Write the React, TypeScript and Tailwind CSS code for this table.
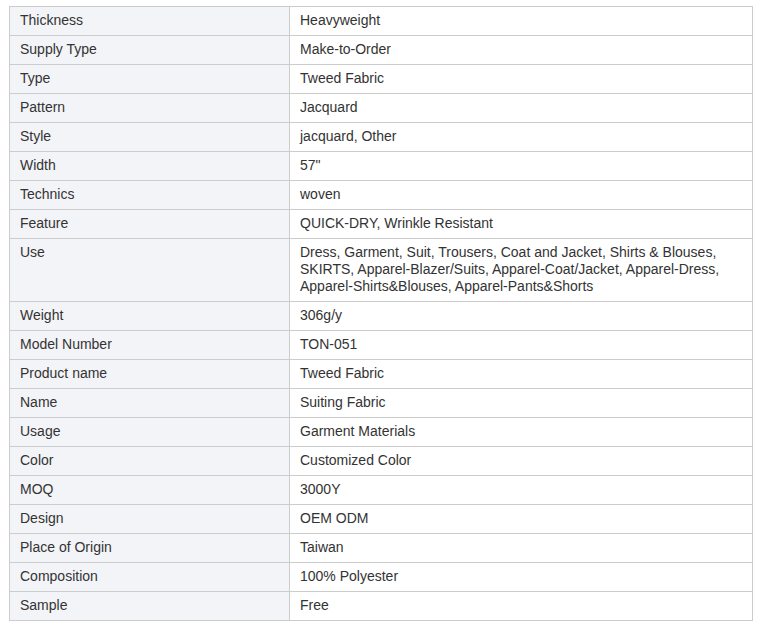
import React from 'react';

const specs: [string, string][] = [
  ['Thickness', 'Heavyweight'],
  ['Supply Type', 'Make-to-Order'],
  ['Type', 'Tweed Fabric'],
  ['Pattern', 'Jacquard'],
  ['Style', 'jacquard, Other'],
  ['Width', '57"'],
  ['Technics', 'woven'],
  ['Feature', 'QUICK-DRY, Wrinkle Resistant'],
  [
    'Use',
    'Dress, Garment, Suit, Trousers, Coat and Jacket, Shirts & Blouses, SKIRTS, Apparel-Blazer/Suits, Apparel-Coat/Jacket, Apparel-Dress, Apparel-Shirts&Blouses, Apparel-Pants&Shorts',
  ],
  ['Weight', '306g/y'],
  ['Model Number', 'TON-051'],
  ['Product name', 'Tweed Fabric'],
  ['Name', 'Suiting Fabric'],
  ['Usage', 'Garment Materials'],
  ['Color', 'Customized Color'],
  ['MOQ', '3000Y'],
  ['Design', 'OEM ODM'],
  ['Place of Origin', 'Taiwan'],
  ['Composition', '100% Polyester'],
  ['Sample', 'Free'],
];

export default function App() {
  return (
    <div className="bg-white w-[762px] h-[629px] pl-[9px] pt-[6px] font-['Liberation_Sans',Arial,sans-serif] text-[14px] text-[#333]">
      <table className="w-[744px] border-collapse border border-[#cccccc] table-fixed">
        <colgroup>
          <col className="w-[280px]" />
          <col />
        </colgroup>
        <tbody>
          {specs.map(([k, v]) => (
            <tr key={k}>
              <td className="border border-[#cccccc] bg-[#f3f4f8] px-[10px] pt-[5px] pb-[6px] leading-[17px] align-top">
                {k}
              </td>
              <td className="border border-[#cccccc] pl-[10px] pr-[20px] pt-[5px] pb-[6px] leading-[17px] align-top">
                {v}
              </td>
            </tr>
          ))}
        </tbody>
      </table>
    </div>
  );
}
